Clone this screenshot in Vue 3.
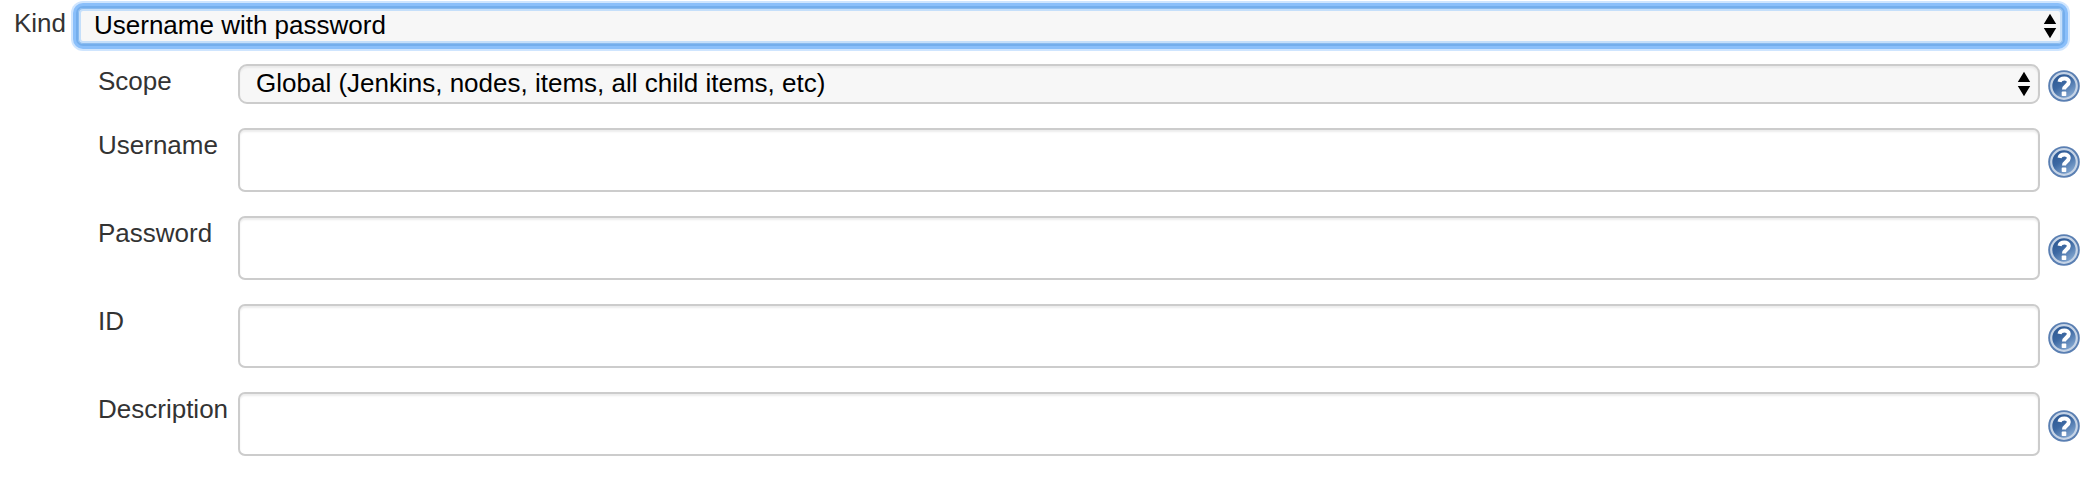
<script setup>
const fields = ['Username', 'Password', 'ID', 'Description']
</script>

<template>
  <main class="form">
    <div class="kind-row">
      <label class="label">Kind</label>
      <div class="select focused">
        <span>Username with password</span>
        <svg class="arrows" width="12" height="24" viewBox="0 0 12 24"><path d="M6 -.3 12.2 10H-.2zM6 24.3 12.2 14H-.2z" /></svg>
      </div>
    </div>
    <div class="row scope-row">
      <label class="label">Scope</label>
      <div class="select">
        <span>Global (Jenkins, nodes, items, all child items, etc)</span>
        <svg class="arrows" width="12" height="24" viewBox="0 0 12 24"><path d="M6 -.3 12.2 10H-.2zM6 24.3 12.2 14H-.2z" /></svg>
      </div>
      <svg class="help" viewBox="0 0 32 32"><use href="#help-icon" /></svg>
    </div>
    <div v-for="name in fields" :key="name" class="row">
      <label class="label" :for="name">{{ name }}</label>
      <input :id="name" class="input" type="text" />
      <svg class="help" viewBox="0 0 32 32"><use href="#help-icon" /></svg>
    </div>
    <svg class="defs" width="0" height="0">
      <defs>
        <linearGradient id="help-fill" x1="0.1" y1="0" x2=".8" y2="1">
          <stop offset="0" stop-color="#2a5590" />
          <stop offset=".45" stop-color="#3c68a2" />
          <stop offset="1" stop-color="#8fb1d8" />
        </linearGradient>
        <symbol id="help-icon" viewBox="0 0 32 32">
          <circle cx="16" cy="16" r="15.8" fill="#5a7fb2" />
          <circle cx="16" cy="16" r="12.8" fill="url(#help-fill)" stroke="#c6d4e6" stroke-width="2.2" />
          <path d="M11.5 11.9C12.3 7.6 20.8 7.3 20.8 12.1C20.8 15.7 16 15.6 16 19.6" fill="none" stroke="#fff" stroke-width="4" />
          <rect x="13.7" y="21.6" width="4.6" height="4.4" rx=".8" fill="#fff" />
        </symbol>
      </defs>
    </svg>
  </main>
</template>

<style>
body {
  margin: 0;
  background: #fff;
}
</style>

<style scoped>
.form {
  box-sizing: border-box;
  width: 2100px;
  height: 504px;
  padding-top: 6px;
  overflow: hidden;
  background: #fff;
  font: 26px/30px "Liberation Sans", Arial, sans-serif;
  color: #333;
}
.kind-row {
  display: grid;
  grid-template-columns: 62px 1989px;
  padding-left: 14px;
  height: 40px;
}
.row {
  display: grid;
  grid-template-columns: 140px 1802px 40px;
  padding-left: 98px;
  height: 64px;
  margin-bottom: 24px;
}
.scope-row {
  height: 40px;
  margin-top: 18px;
}
.label {
  padding-top: 2px;
  white-space: nowrap;
}
.select {
  box-sizing: border-box;
  display: flex;
  justify-content: space-between;
  height: 40px;
  padding: 2px 8px 0 16px;
  border: 2px solid #ccc;
  border-radius: 9px;
  background: #f7f7f7;
  box-shadow: inset 0 2px 2px rgba(0, 0, 0, 0.055);
  color: #000;
}
.focused {
  padding-right: 7px;
  border-color: #74aeec;
  border-radius: 7px;
  box-shadow: 0 0 0 3px #8abffa, 0 0 0 5px #cfe5fe, inset 0 0 0 1px #8abbef, inset 0 0 0 3px #c5dffa;
}
.arrows {
  margin-top: 4px;
  overflow: visible;
}
.input {
  box-sizing: border-box;
  width: 100%;
  height: 64px;
  margin: 0;
  padding: 8px 12px;
  border: 2px solid #ccc;
  border-radius: 7px;
  outline: none;
  background: #fff;
  box-shadow: inset 0 2px 2px rgba(0, 0, 0, 0.075);
  font: inherit;
}
.help {
  display: block;
  width: 32px;
  height: 32px;
  margin: 18px 0 0 8px;
}
.scope-row .help {
  margin-top: 6px;
}
.defs {
  display: block;
}
</style>
